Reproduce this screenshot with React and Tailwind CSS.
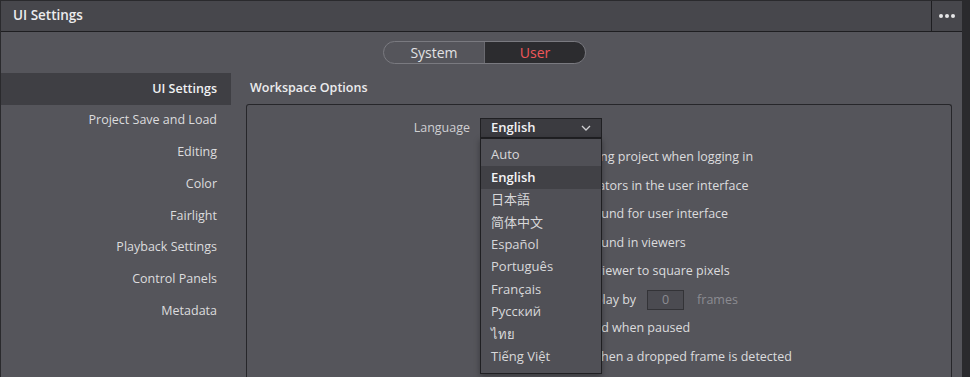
const sidebar = [
  'UI Settings',
  'Project Save and Load',
  'Editing',
  'Color',
  'Fairlight',
  'Playback Settings',
  'Control Panels',
  'Metadata',
];

const languages = ['Auto', 'English', '日本語', '简体中文', 'Español', 'Português', 'Français', 'Русский', 'ไทย', 'Tiếng Việt'];

const options = [
  'Reload last working project when logging in',
  'Show focus indicators in the user interface',
  'Use gray background for user interface',
  'Use gray background in viewers',
  'Resize videos in viewer to square pixels',
  null,
  'Show deinterlaced when paused',
  'Abort playback when a dropped frame is detected',
];

function Checkbox() {
  return <span className="w-[13px] h-[13px] shrink-0 rounded-[2px] border border-[#2a2a2e] bg-[#3d3d42]" />;
}

export default function App() {
  return (
    <div
      className="w-[970px] h-[377px] overflow-hidden bg-[#2a2a2d] text-[#d6d6d8] flex flex-col"
      style={{ fontFamily: '"Open Sans", "Noto Sans CJK SC", "Noto Sans", sans-serif' }}
    >
      {/* Title bar */}
      <div className="h-[31px] shrink-0 flex items-stretch bg-[#47474c] border-b border-[#1e1e21] mr-[8px] ml-px mt-px">
        <div className="flex-1 flex items-center pl-[12px] pb-px text-[13.5px] font-semibold text-[#ececee]">UI Settings</div>
        <div className="w-[31px] border-l border-[#1e1e21] flex items-center justify-center gap-[2px]">
          <span className="w-[4px] h-[4px] rounded-full bg-[#e6e6e8]" />
          <span className="w-[4px] h-[4px] rounded-full bg-[#e6e6e8]" />
          <span className="w-[4px] h-[4px] rounded-full bg-[#e6e6e8]" />
        </div>
      </div>

      {/* Body */}
      <div className="flex-1 flex flex-col bg-[#55555b] mr-[8px] ml-px">
        {/* System / User toggle */}
        <div className="flex justify-center pt-[9px] pl-[6px]">
          <div className="flex w-[203px] h-[23px] rounded-full border border-[#7a7a80] overflow-hidden text-[14px]">
            <div className="flex-1 flex items-center justify-center text-[#e2e2e4] border-r border-[#6a6a70]">System</div>
            <div className="flex-1 flex items-center justify-center bg-[#2c2c2f] text-[#f0575a]">User</div>
          </div>
        </div>

        <div className="flex-1 flex mt-[8px]">
          {/* Sidebar */}
          <div className="w-[230px] shrink-0 flex flex-col pt-px text-[12.5px]">
            {sidebar.map((item, i) => (
              <div
                key={item}
                className={`flex items-center justify-end pr-[14px] ${
                  i === 0 ? 'bg-[#3f3f44] text-[#f0f0f2] font-semibold h-[32px]' : 'text-[#dcdcde] h-[31.7px]'
                }`}
              >
                {item}
              </div>
            ))}
          </div>

          {/* Content */}
          <div className="flex-1 flex flex-col pl-[15px] pr-[10px]">
            <div className="h-[32px] flex items-center pl-[4px] text-[12.5px] font-semibold text-[#ececee]">Workspace Options</div>
            <div className="flex-1 border border-[#26262a] border-b-0 rounded-t-[3px] relative">
              {/* Language row */}
              <div className="flex items-center mt-[13px] h-[20px]">
                <div className="w-[223px] text-right text-[12.5px] text-[#cfcfd2]">Language</div>
                <div className="ml-[10px] w-[122px] h-[20px] bg-[#3b3b40] border border-[#202023] flex items-center justify-between pl-[10px] pr-[10px] text-[13px] font-semibold text-[#f2f2f4]">
                  <span>English</span>
                  <svg width="10" height="6" viewBox="0 0 10 6" fill="none">
                    <path d="M1 1l4 4 4-4" stroke="#cfcfd2" strokeWidth="1.3" />
                  </svg>
                </div>
              </div>

              {/* Option rows */}
              <div className="flex flex-col mt-[5px] text-[12.5px]">
                {options.map((text, i) => (
                  <div key={i} className="h-[28.6px] flex items-center pl-[235px] gap-[6px]">
                    <Checkbox />
                    {text ? (
                      <span className="text-[#dcdcde]">{text}</span>
                    ) : (
                      <span className="flex items-center text-[#dcdcde]">
                        Delay viewer display by
                        <span className="ml-[11px] w-[37px] h-[20px] border border-[#333337] bg-[#4b4b51] flex items-center justify-center text-[#8c8c92]">0</span>
                        <span className="ml-[13px] text-[#8c8c92]">frames</span>
                      </span>
                    )}
                  </div>
                ))}
              </div>

              {/* Open language dropdown */}
              <div className="absolute left-[233px] top-[33px] w-[122px] h-[236px] bg-[#505056] border border-[#1f1f22] shadow-[0_2px_6px_rgba(0,0,0,0.35)] pt-[5px] text-[13px]">
                {languages.map((lang) => (
                  <div
                    key={lang}
                    className={`h-[22.4px] flex items-center pl-[10px] ${
                      lang === 'English' ? 'bg-[#414146] text-[#f4f4f6] font-semibold' : 'text-[#d8d8da]'
                    }`}
                  >
                    {lang}
                  </div>
                ))}
              </div>
            </div>
          </div>
        </div>
      </div>
    </div>
  );
}
